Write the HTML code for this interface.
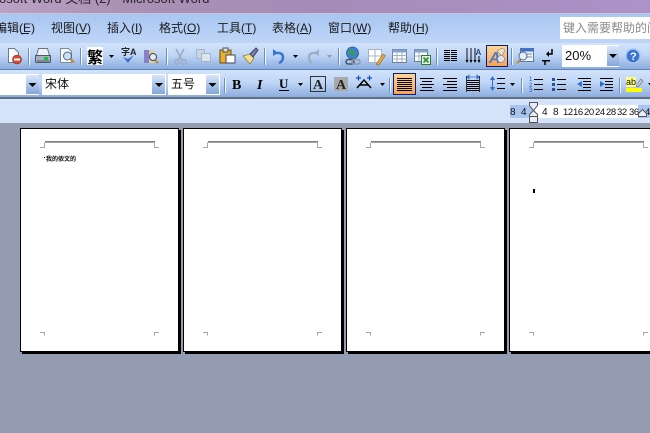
<!DOCTYPE html>
<html><head><meta charset="utf-8">
<style>
html,body{margin:0;padding:0;width:650px;height:433px;overflow:hidden;background:#939cb0}
svg{display:block}
text{font-family:"Liberation Sans","WenQuanYi Zen Hei","Noto Sans CJK SC",sans-serif}
.m{font-size:12px;fill:#1a1a1a}
.s{stroke:#7f7f7f;stroke-width:1;fill:none;shape-rendering:crispEdges}
.c{stroke:#a5a5a5;stroke-width:1;fill:none;shape-rendering:crispEdges}
</style></head><body>
<svg width="650" height="433" viewBox="0 0 650 433" xmlns="http://www.w3.org/2000/svg">
<defs>
<linearGradient id="t" x1="0" x2="0" y1="0" y2="1"><stop offset="0" stop-color="#d2e3fb"/><stop offset=".45" stop-color="#c0d6f6"/><stop offset="1" stop-color="#8cadde"/></linearGradient>
<linearGradient id="b" x1="0" x2="0" y1="0" y2="1"><stop offset="0" stop-color="#d8e6fb"/><stop offset="1" stop-color="#84a6d8"/></linearGradient>
<linearGradient id="o" x1="0" x2="0" y1="0" y2="1"><stop offset="0" stop-color="#ffd79a"/><stop offset="1" stop-color="#fb9f50"/></linearGradient>
<linearGradient id="tt" x1="0" x2="1" y1="0" y2="0"><stop offset="0" stop-color="#b9a2c4"/><stop offset=".2" stop-color="#a991b4"/><stop offset=".5" stop-color="#a58cb8"/><stop offset="1" stop-color="#ab92c8"/></linearGradient>
<linearGradient id="mb" x1="0" x2="0" y1="0" y2="1"><stop offset="0" stop-color="#a8c6f1"/><stop offset="1" stop-color="#bfd5f7"/></linearGradient>
</defs>

<!-- title -->
<rect width="650" height="13" fill="url(#tt)"/>
<text x="-1" y="3" font-size="13" fill="#2a2530">osoft Word 文档 (2) - Microsoft Word</text>
<rect y="13" width="650" height="1" fill="#c9c4dc"/>
<!-- menu -->
<rect y="14" width="650" height="29" fill="url(#mb)"/>
<g class="m">
<text x="-5" y="32">编辑(E)</text><rect x="21" y="33" width="8" height="1" fill="#1a1a1a"/>
<text x="51" y="32">视图(V)</text><rect x="79" y="33" width="8" height="1" fill="#1a1a1a"/>
<text x="107" y="32">插入(I)</text><rect x="135" y="33" width="4" height="1" fill="#1a1a1a"/>
<text x="159" y="32">格式(O)</text><rect x="187" y="33" width="9" height="1" fill="#1a1a1a"/>
<text x="217" y="32">工具(T)</text><rect x="245" y="33" width="7" height="1" fill="#1a1a1a"/>
<text x="272" y="32">表格(A)</text><rect x="300" y="33" width="8" height="1" fill="#1a1a1a"/>
<text x="328" y="32">窗口(W)</text><rect x="356" y="33" width="11" height="1" fill="#1a1a1a"/>
<text x="388" y="32">帮助(H)</text><rect x="416" y="33" width="8" height="1" fill="#1a1a1a"/>
</g>
<rect x="560" y="17" width="90" height="22" fill="#fff"/>
<text x="563" y="32" font-size="12" fill="#8a8a8a">键入需要帮助的问题</text>

<!-- toolbars -->
<rect y="43" width="650" height="26" fill="url(#t)"/>
<rect y="69" width="650" height="1" fill="#5f83b8"/>
<rect y="70" width="650" height="27" fill="url(#t)"/>
<rect y="97" width="650" height="2" fill="#63707f"/>

<!-- separators -->
<g fill="#6d8fc0">
<rect x="28" y="48" width="1" height="17"/><rect x="80" y="48" width="1" height="17"/><rect x="166" y="48" width="1" height="17"/><rect x="264" y="48" width="1" height="17"/><rect x="338" y="48" width="1" height="17"/><rect x="436" y="48" width="1" height="17"/><rect x="511" y="48" width="1" height="17"/>
<rect x="224" y="78" width="1" height="15"/><rect x="389" y="78" width="1" height="15"/><rect x="521" y="78" width="1" height="15"/><rect x="619" y="78" width="1" height="15"/>
</g>
<g fill="#f3f8ff">
<rect x="29" y="48" width="1" height="17"/><rect x="81" y="48" width="1" height="17"/><rect x="167" y="48" width="1" height="17"/><rect x="265" y="48" width="1" height="17"/><rect x="339" y="48" width="1" height="17"/><rect x="437" y="48" width="1" height="17"/><rect x="512" y="48" width="1" height="17"/>
<rect x="225" y="78" width="1" height="15"/><rect x="390" y="78" width="1" height="15"/><rect x="522" y="78" width="1" height="15"/><rect x="620" y="78" width="1" height="15"/>
</g>

<!-- permission doc -->
<path d="M8.500 48.500h6l4 4v10h-10z" fill="#fbfcff" stroke="#6a7a90"/>
<circle cx="17" cy="59.500" r="4.500" fill="#d8472c" stroke="#8a2a18" stroke-width=".6"/><rect x="14" y="58.500" width="6" height="2" fill="#fff"/>
<!-- print -->
<path d="M38.500 48.500h9l2 7h-13z" fill="#eef2f7" stroke="#6a7484"/><path d="M35.500 55.500h15v6a1 1 0 0 1-1 1h-13a1 1 0 0 1-1-1z" fill="#a4afbb" stroke="#4e5868"/><rect x="37" y="60" width="12" height="2" fill="#7b8794"/><rect x="44" y="57" width="4" height="3" fill="#19c23a"/>
<!-- preview -->
<path d="M60.500 48.500h8l3 3v11h-11z" fill="#fbfcff" stroke="#7a8797"/><circle cx="67.500" cy="56" r="4" fill="#c9e1f6" stroke="#596577"/><path d="M70.500 59l3.500 3.500" stroke="#c88a30" stroke-width="2.200"/>
<!-- 繁 -->
<rect x="87" y="47" width="16" height="18" fill="#fff"/>
<text x="87" y="63" font-size="16" font-weight="bold" fill="#000">繁</text>
<path d="M109 55h5l-2.500 3z" fill="#000"/>
<!-- spell -->
<text x="121" y="55" font-size="9" font-weight="bold" fill="#222">字A</text>
<path d="M123 57l5 6 6-8-6 4z" fill="#3f6fc8"/>
<!-- research -->
<rect x="144" y="50" width="5" height="13" fill="#8a7fc8"/><rect x="149" y="50" width="5" height="13" fill="#d8d3a0"/><circle cx="153" cy="57" r="3.500" fill="#dfeaf5" stroke="#444"/><path d="M155 60l3 3" stroke="#c88a20" stroke-width="2"/>
<!-- cut -->
<path d="M176 49l6 11M184 49l-6 11" stroke="#9cabc0" stroke-width="1.500"/><circle cx="177" cy="62" r="2.300" fill="none" stroke="#9cabc0" stroke-width="1.300"/><circle cx="184" cy="62" r="2.300" fill="none" stroke="#9cabc0" stroke-width="1.300"/>
<!-- copy -->
<rect x="196.500" y="49.500" width="8" height="9" fill="#c8d4e4" stroke="#a7b5c8"/><rect x="201.500" y="53.500" width="9" height="8" fill="#dbe4ef" stroke="#a7b5c8"/>
<!-- paste -->
<rect x="220" y="50" width="11" height="13" fill="#e8b02c" stroke="#6a4a10"/><rect x="223" y="48" width="5" height="4" fill="#dcdcdc" stroke="#555"/><rect x="226" y="55" width="9" height="8" fill="#fff" stroke="#445"/>
<!-- painter -->
<path d="M243 56l7-2 4 4-4 6z" fill="#f0e090" stroke="#8a7a30" stroke-width=".7"/><path d="M250 54l6-6 2 2-5 7z" fill="#7a7fb8" stroke="#445"/>
<!-- undo -->
<path d="M274 53h5a4 4 0 0 1 4 4c0 3-1 5-4 6" fill="none" stroke="#3a74cf" stroke-width="2.500"/><path d="M273 49v7l5-3z" fill="#3a74cf"/>
<path d="M293 55h5l-2.500 3z" fill="#000"/>
<path d="M318 53h-5a4 4 0 0 0-4 4c0 3 1 5 3 6" fill="none" stroke="#a0aec2" stroke-width="2.500"/><path d="M319 49v7l-5-3z" fill="#a0aec2"/>
<path d="M327 55h5l-2.500 3z" fill="#8c9ab0"/>
<!-- hyperlink -->
<circle cx="352.500" cy="53" r="6" fill="#3f7fd0" stroke="#2a5a8a" stroke-width=".8"/><path d="M349 49l4 1 2 3-3 3-2-2z" fill="#35a04a"/><path d="M354 55l2-1-1 3z" fill="#35a04a"/>
<rect x="346" y="59.500" width="8" height="4.500" rx="2.200" fill="none" stroke="#475266" stroke-width="1.500"/><rect x="352" y="59.500" width="8" height="4.500" rx="2.200" fill="none" stroke="#8d98a8" stroke-width="1.500"/>
<!-- tables & borders -->
<rect x="368.500" y="49.500" width="13" height="13" fill="#fff" stroke="#a8b4c4"/><path d="M375 49.500v13M368.500 56h13" stroke="#a8b4c4"/><path d="M376 64l7-10 2.500 1.500-7 10z" fill="#e8a838" stroke="#6a4a10" stroke-width=".5"/>
<!-- insert table -->
<rect x="392.500" y="49.500" width="14" height="13" fill="#fff" stroke="#6a7fa0"/><rect x="392.500" y="49.500" width="14" height="3" fill="#87a3cc"/><path d="M397 52v10M402 52v10M392.500 55.500h14M392.500 59h14" stroke="#9fb0c8" fill="none"/>
<!-- excel -->
<rect x="414.500" y="49.500" width="13" height="12" fill="#fff" stroke="#6a7fa0"/><rect x="414.500" y="49.500" width="13" height="3" fill="#87a3cc"/><path d="M419 52v9M414.500 56h13" stroke="#9fb0c8"/><rect x="421.500" y="55.500" width="9" height="9" fill="#e9f3e4" stroke="#2f7f35"/><path d="M423.500 57.500l5 5M428.500 57.500l-5 5" stroke="#2f8f35" stroke-width="1.600"/>
<!-- columns -->
<g fill="#000"><rect x="444" y="50" width="6" height="1"/><rect x="451" y="50" width="6" height="1"/><rect x="444" y="52" width="6" height="1"/><rect x="451" y="52" width="6" height="1"/><rect x="444" y="54" width="6" height="1"/><rect x="451" y="54" width="6" height="1"/><rect x="444" y="56" width="6" height="1"/><rect x="451" y="56" width="6" height="1"/><rect x="444" y="58" width="6" height="1"/><rect x="451" y="58" width="6" height="1"/><rect x="444" y="60" width="6" height="1"/><rect x="451" y="60" width="6" height="1"/></g>
<!-- text direction -->
<path d="M467 48v14M471 48v14M475 48v14M479 56v6" stroke="#111"/><path d="M465.500 60h3l-1.500 3zM469.500 60h3l-1.500 3zM473.500 60h3l-1.500 3zM477.500 60h3l-1.500 3z" fill="#000"/><text x="475.500" y="55" font-size="8" font-weight="bold" fill="#2a4a80">A</text>
<!-- drawing active -->
<rect x="486.500" y="45.500" width="21" height="21" fill="url(#o)" stroke="#0a1f78"/>
<text x="489" y="63" font-size="16" font-style="italic" font-weight="bold" fill="#4f7cc4">A</text><path d="M497 51l5-3 3 2-3 6z" fill="#e6e2cf" stroke="#667" stroke-width=".5"/><circle cx="501" cy="59" r="3.500" fill="#dfe4ee" stroke="#778" stroke-width=".6"/>
<!-- doc map -->
<rect x="520.500" y="48.500" width="13" height="13" fill="#eef4fc" stroke="#5a7aa8"/><rect x="520.500" y="48.500" width="13" height="3" fill="#3f6fc8"/><path d="M527 54h5M527 57h5" stroke="#7a8ba5"/><circle cx="523" cy="56" r="4" fill="#dff0f8" stroke="#667"/><path d="M520 60l-3 3" stroke="#c88a20" stroke-width="2"/>
<!-- show/hide -->
<path d="M552 49v5h-4M545 60v5" stroke="#000" stroke-width="1.500" fill="none"/><path d="M549 51v6l-3-3z" fill="#000"/><path d="M542 60h8v1.500h-8z" fill="#000"/>
<!-- zoom box -->
<rect x="562" y="45" width="57" height="22" fill="#fff"/>
<text x="565" y="60" font-size="13" fill="#111">20%</text>
<rect x="607" y="46" width="12" height="20" fill="url(#b)"/>
<path d="M609 54h8l-4 4z" fill="#000"/>
<!-- help -->
<circle cx="633" cy="56" r="7" fill="#3a74d0" stroke="#a6c6f2" stroke-width="1.500"/><text x="630" y="60" font-size="11" font-weight="bold" fill="#fff">?</text>

<!-- combos -->
<rect x="0" y="74" width="39" height="21" fill="#fff"/>
<rect x="26" y="75" width="13" height="19" fill="url(#b)"/>
<path d="M28.500 83h8l-4 4z" fill="#000"/>
<rect x="42" y="74" width="124" height="21" fill="#fff"/>
<text x="45" y="88" font-size="12" fill="#111">宋体</text>
<rect x="152" y="75" width="13" height="19" fill="url(#b)"/>
<path d="M155 83h8l-4 4z" fill="#000"/>
<rect x="168" y="74" width="52" height="21" fill="#fff"/>
<text x="171" y="88" font-size="12" fill="#111">五号</text>
<rect x="206" y="75" width="13" height="19" fill="url(#b)"/>
<path d="M208.500 83h8l-4 4z" fill="#000"/>
<!-- BIU -->
<text x="232" y="89" font-size="14" font-weight="bold" fill="#000" style="font-family:'Liberation Serif'">B</text>
<text x="257" y="89" font-size="14" font-weight="bold" font-style="italic" fill="#000" style="font-family:'Liberation Serif'">I</text>
<text x="279" y="88" font-size="13" font-weight="bold" fill="#000" style="font-family:'Liberation Serif'">U</text>
<rect x="279" y="90" width="10" height="1" fill="#000"/>
<path d="M298 83h5l-2.500 3z" fill="#000"/>
<rect x="310.500" y="76.500" width="15" height="15" fill="none" stroke="#333"/>
<text x="313" y="89" font-size="14" font-weight="bold" fill="#222" style="font-family:'Liberation Serif'">A</text>
<rect x="334" y="77" width="14" height="14" fill="#a9a9a9"/>
<text x="336" y="89" font-size="14" font-weight="bold" fill="#222" style="font-family:'Liberation Serif'">A</text>
<!-- char scale -->
<path d="M357 88l7-8 7 8M360 85h8" stroke="#000" stroke-width="1.500" fill="none"/><path d="M356 78h5M367 78h5M358.500 75.500v5M369.500 75.500v5" stroke="#0a50d0" stroke-width="1.200"/>
<path d="M380 83h5l-2.500 3z" fill="#000"/>
<!-- align left active -->
<rect x="393.500" y="73.500" width="22" height="21" fill="url(#o)" stroke="#0a1f78"/>
<g fill="#000"><rect x="397" y="78" width="15" height="1"/><rect x="397" y="80" width="15" height="1"/><rect x="397" y="82" width="15" height="1"/><rect x="397" y="84" width="15" height="1"/><rect x="397" y="86" width="15" height="1"/><rect x="397" y="88" width="15" height="1"/><rect x="397" y="90" width="15" height="1"/>
<rect x="420" y="78" width="14" height="1"/><rect x="422" y="81" width="10" height="1"/><rect x="420" y="84" width="14" height="1"/><rect x="422" y="87" width="10" height="1"/><rect x="420" y="90" width="14" height="1"/>
<rect x="443" y="78" width="14" height="1"/><rect x="447" y="81" width="10" height="1"/><rect x="443" y="84" width="14" height="1"/><rect x="447" y="87" width="10" height="1"/><rect x="443" y="90" width="14" height="1"/>
<rect x="466" y="80" width="14" height="1"/><rect x="466" y="82" width="14" height="1"/><rect x="466" y="84" width="14" height="1"/><rect x="466" y="86" width="14" height="1"/><rect x="466" y="88" width="14" height="1"/><rect x="466" y="90" width="14" height="1"/>
<rect x="497" y="78" width="8" height="1"/><rect x="497" y="83" width="8" height="1"/><rect x="497" y="88" width="8" height="1"/>
<rect x="534" y="79" width="9" height="1"/><rect x="534" y="84" width="9" height="1"/><rect x="534" y="89" width="9" height="1"/>
<rect x="557" y="79" width="9" height="1"/><rect x="557" y="84" width="9" height="1"/><rect x="557" y="89" width="9" height="1"/>
<rect x="578" y="78" width="13" height="1"/><rect x="583" y="81" width="8" height="1"/><rect x="583" y="84" width="8" height="1"/><rect x="583" y="87" width="8" height="1"/><rect x="578" y="90" width="13" height="1"/>
<rect x="600" y="78" width="13" height="1"/><rect x="605" y="81" width="8" height="1"/><rect x="605" y="84" width="8" height="1"/><rect x="605" y="87" width="8" height="1"/><rect x="600" y="90" width="13" height="1"/>
</g>
<path d="M466 77h14M467 77l2-2v4zM479 77l-2-2v4z" stroke="#2f6fd0" fill="#2f6fd0" stroke-width=".8"/>
<rect x="466" y="76" width="1" height="16" fill="#333"/>
<rect x="479" y="76" width="1" height="16" fill="#333"/>
<path d="M490 80l2.500-4 2.500 4zM490 87l2.500 4 2.500-4z" fill="#2f6fd0"/><rect x="492" y="80" width="1" height="7" fill="#2f6fd0"/>
<path d="M510 83h5l-2.500 3z" fill="#000"/>
<text x="529" y="81" font-size="6" fill="#2255c0">1</text><text x="529" y="87" font-size="6" fill="#2255c0">2</text><text x="529" y="92" font-size="6" fill="#2255c0">3</text>
<g fill="#28508f"><rect x="552" y="78" width="3" height="3"/><rect x="552" y="83" width="3" height="3"/><rect x="552" y="88" width="3" height="3"/></g>
<path d="M577 84l5-3v6z" fill="#2f6fd0"/><path d="M605 84l-5-3v6z" fill="#2f6fd0"/>
<!-- highlight -->
<rect x="626" y="77" width="10" height="10" fill="#ffff80"/>
<text x="626" y="85" font-size="9" fill="#111">ab</text>
<path d="M636 86l5-7 2 2-5 6z" fill="#c8d0dc" stroke="#667" stroke-width=".6"/>
<rect x="626" y="88" width="16" height="4" fill="#ffff00"/>
<path d="M648 83h5l-2.500 3z" fill="#000"/>

<!-- ruler -->
<rect y="99" width="650" height="24" fill="#d5e4fb"/>
<rect x="510" y="105" width="23" height="13" fill="#a9c4f0"/>
<rect x="533" y="105" width="105" height="13" fill="#fff"/>
<rect x="638" y="105" width="12" height="13" fill="#a9c4f0"/>
<g font-size="10" fill="#111">
<text x="510" y="115">8</text><text x="521" y="115">4</text>
<text x="542" y="115">4</text><text x="553" y="115">8</text>
</g>
<g font-size="9.500" fill="#111" letter-spacing="-.4">
<text x="563" y="115">12</text><text x="573" y="115">16</text><text x="584" y="115">20</text><text x="595" y="115">24</text><text x="606" y="115">28</text><text x="617" y="115">32</text><text x="629" y="115">36</text><text x="645" y="115">4</text>
</g>
<path d="M529.500 102.500h8v3l-4 5-4-5z" fill="#e8eef8" stroke="#555"/>
<path d="M529.500 116.500v-2l4-4 4 4v2z" fill="#e8eef8" stroke="#555"/>
<rect x="529.500" y="116.500" width="8" height="6" fill="#e8eef8" stroke="#555"/>
<path d="M638.500 116.500v-3l4-4 4 4v3z" fill="#e8eef8" stroke="#555"/>

<!-- workspace -->
<rect y="123" width="650" height="310" fill="#939cb0"/>

<!-- pages -->
<g shape-rendering="crispEdges">
<rect x="22" y="130" width="159" height="224" fill="#000"/>
<rect x="20.500" y="128.500" width="158" height="223" fill="#fff" stroke="#000"/>
<rect x="185" y="130" width="159" height="224" fill="#000"/>
<rect x="183.500" y="128.500" width="158" height="223" fill="#fff" stroke="#000"/>
<rect x="348" y="130" width="159" height="224" fill="#000"/>
<rect x="346.500" y="128.500" width="158" height="223" fill="#fff" stroke="#000"/>
<rect x="511" y="130" width="159" height="224" fill="#000"/>
<rect x="509.500" y="128.500" width="158" height="223" fill="#fff" stroke="#000"/>
</g>
<!-- marks -->
<g><path class="s" d="M45 141.500h110"/><path class="c" d="M45 142.500h110M40 147.500h4.500v-5M159 147.500h-4.500v-5M40 332.500h4.500v3M159 332.500h-4.500v3"/></g>
<g transform="translate(163 0)"><path class="s" d="M45 141.500h110"/><path class="c" d="M45 142.500h110M40 147.500h4.500v-5M159 147.500h-4.500v-5M40 332.500h4.500v3M159 332.500h-4.500v3"/></g>
<g transform="translate(326 0)"><path class="s" d="M45 141.500h110"/><path class="c" d="M45 142.500h110M40 147.500h4.500v-5M159 147.500h-4.500v-5M40 332.500h4.500v3M159 332.500h-4.500v3"/></g>
<g transform="translate(489 0)"><path class="s" d="M45 141.500h110"/><path class="c" d="M45 142.500h110M40 147.500h4.500v-5M159 147.500h-4.500v-5M40 332.500h4.500v3M159 332.500h-4.500v3"/></g>
<rect x="44" y="157" width="1" height="1" fill="#000"/>
<text x="46" y="161" font-size="6" font-weight="bold" fill="#111">我的侬文的</text>
<rect x="533" y="189" width="2" height="4" fill="#000"/>
</svg>
</body></html>
